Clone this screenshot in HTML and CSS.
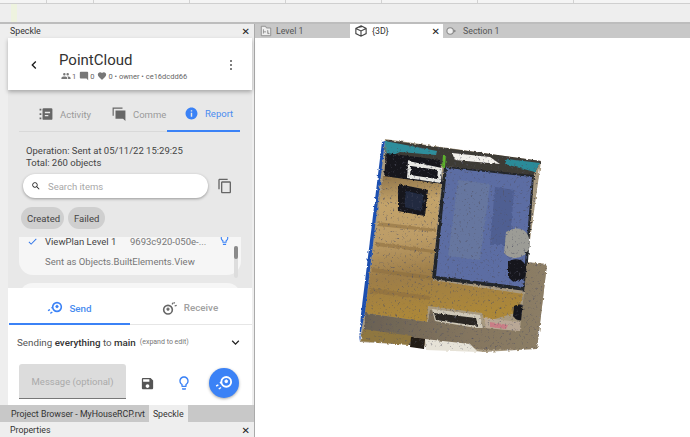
FILE: index.html
```html
<!DOCTYPE html>
<html lang="en">
<head>
<meta charset="utf-8">
<title>Speckle PointCloud</title>
<link rel="stylesheet" href="styles.css">
</head>
<body>
<div class="app">
  <div class="ribbon"><i></i><i></i><i></i><i></i><i></i><i></i><i></i></div>
  <div class="toolbar"><span class="mark"></span></div>
  <div class="work">
    <aside class="side">
      <div class="dock-title"><span>Speckle</span><b class="x">✕</b></div>
      <div class="plugin">
        <header class="head">
          <svg class="back" viewBox="0 0 24 24"><path d="M15.41 7.41L14 6l-6 6 6 6 1.41-1.41L10.83 12z"/></svg>
          <div class="head-text">
            <div class="title">PointCloud</div>
            <div class="meta">
              <svg viewBox="0 0 24 24"><path d="M16 11a3 3 0 1 0 0-6 3 3 0 0 0 0 6zm-8 0a3 3 0 1 0 0-6 3 3 0 0 0 0 6zm0 2c-2.3 0-7 1.2-7 3.500V19h14v-2.500C15 14.200 10.300 13 8 13zm8 0h-1c1.200.9 2 2 2 3.500V19h6v-2.500c0-2.300-4.700-3.500-7-3.500z"/></svg><span>1</span>
              <svg viewBox="0 0 24 24"><path d="M21.990 4c0-1.100-.89-2-1.990-2H4c-1.100 0-2 .9-2 2v12c0 1.100.9 2 2 2h14l4 4-.01-18z"/></svg><span>0</span>
              <svg viewBox="0 0 24 24"><path d="M12 21.350l-1.450-1.320C5.400 15.360 2 12.280 2 8.500 2 5.420 4.420 3 7.500 3c1.740 0 3.410.81 4.500 2.090C13.090 3.810 14.760 3 16.500 3 19.580 3 22 5.420 22 8.500c0 3.780-3.400 6.860-8.550 11.540L12 21.350z"/></svg><span>0 • owner • ce16dcdd66</span>
            </div>
          </div>
          <div class="dots"><i></i><i></i><i></i></div>
        </header>
        <section class="report">
          <nav class="tabs">
            <div class="tab">
              <svg class="tab-ic" viewBox="0 0 24 24"><path d="M1 3h3v3H1zM1 10.500h3v3H1zM1 18h3v3H1zM8 2h13a2 2 0 0 1 2 2v16a2 2 0 0 1-2 2H8a2 2 0 0 1-2-2V4a2 2 0 0 1 2-2zm2 6v2.500h9V8zm0 5.500V16h6v-2.500z" fill-rule="evenodd"/></svg>
              <span>Activity</span>
            </div>
            <div class="tab">
              <svg class="tab-ic" viewBox="0 0 24 24"><path d="M1 1h17v2H3v12H1zM6 6h17v18l-4-4H6z"/></svg>
              <span>Comme</span>
            </div>
            <div class="tab active">
              <svg class="tab-ic" viewBox="0 0 24 24"><path d="M12 1C5.930 1 1 5.930 1 12s4.930 11 11 11 11-4.930 11-11S18.070 1 12 1zm1.300 17h-2.600v-7.500h2.600V18zm0-9.500h-2.600V6h2.600v2.500z"/></svg>
              <span>Report</span>
            </div>
          </nav>
          <div class="summary">
            <div>Operation: Sent at 05/11/22 15:29:25</div>
            <div>Total: 260 objects</div>
          </div>
          <div class="search-row">
            <div class="search">
              <svg viewBox="0 0 24 24"><path d="M15.500 14h-.79l-.28-.27C15.410 12.590 16 11.110 16 9.500 16 5.910 13.090 3 9.500 3S3 5.910 3 9.500 5.910 16 9.500 16c1.610 0 3.090-.59 4.230-1.570l.27.28v.79l5 4.990L20.490 19l-4.990-5zm-6 0C7.010 14 5 11.990 5 9.500S7.010 5 9.500 5 14 7.010 14 9.500 11.990 14 9.500 14z"/></svg>
              <span>Search items</span>
            </div>
            <svg class="copy" viewBox="0 0 24 24"><path d="M16 1H4c-1.100 0-2 .9-2 2v14h2V3h12V1zm3 4H8c-1.100 0-2 .9-2 2v14c0 1.100.9 2 2 2h11c1.100 0 2-.9 2-2V7c0-1.100-.9-2-2-2zm0 16H8V7h11v14z"/></svg>
          </div>
          <div class="chips"><span class="chip">Created</span><span class="chip">Failed</span></div>
          <div class="list">
            <div class="card">
              <div class="row">
                <svg class="check" viewBox="0 0 24 24"><path d="M9 16.170L4.830 12l-1.420 1.410L9 19 21 7l-1.410-1.410z"/></svg>
                <span class="name">ViewPlan Level 1</span>
                <span class="id">9693c920-050e-...</span>
                <svg class="bulb-top" viewBox="0 0 24 24"><path d="M9 21c0 .55.45 1 1 1h4c.55 0 1-.45 1-1v-1H9v1zm3-19C8.140 2 5 5.140 5 9c0 2.380 1.190 4.470 3 5.740V17c0 .55.45 1 1 1h6c.55 0 1-.45 1-1v-2.260c1.810-1.270 3-3.360 3-5.740 0-3.860-3.140-7-7-7zm2.850 11.100l-.85.6V16h-4v-2.300l-.85-.6C7.800 12.160 7 10.630 7 9c0-2.760 2.240-5 5-5s5 2.240 5 5c0 1.630-.8 3.160-2.150 4.100z"/></svg>
              </div>
              <div class="sent">Sent as Objects.BuiltElements.View</div>
            </div>
            <div class="card next"></div>
            <div class="scroll"><i></i></div>
          </div>
        </section>
        <section class="sender">
          <nav class="send-tabs">
            <div class="stab active">
              <svg viewBox="0 0 24 24"><use href="#ball"/></svg><span>Send</span>
            </div>
            <div class="stab">
              <svg viewBox="0 0 24 24"><use href="#ball2"/></svg><span>Receive</span>
            </div>
          </nav>
          <div class="sending">
            <span>Sending <b>everything</b> to <b>main</b></span><small>(expand to edit)</small>
            <svg viewBox="0 0 24 24"><path d="M7.410 8.590L12 13.170l4.590-4.580L18 10l-6 6-6-6z"/></svg>
          </div>
          <div class="compose">
            <div class="message">Message (optional)</div>
            <svg class="save" viewBox="0 0 24 24"><path d="M17 3H5c-1.110 0-2 .9-2 2v14c0 1.100.89 2 2 2h14c1.100 0 2-.9 2-2V7l-4-4zm-5 16c-1.660 0-3-1.340-3-3s1.340-3 3-3 3 1.340 3 3-1.340 3-3 3zm3-10H5V5h10v4z"/></svg>
            <svg class="bulb" viewBox="0 0 24 24"><path d="M9 21c0 .55.45 1 1 1h4c.55 0 1-.45 1-1v-1H9v1zm3-19C8.140 2 5 5.140 5 9c0 2.380 1.190 4.470 3 5.740V17c0 .55.45 1 1 1h6c.55 0 1-.45 1-1v-2.260c1.810-1.270 3-3.360 3-5.740 0-3.860-3.140-7-7-7zm2.850 11.100l-.85.6V16h-4v-2.300l-.85-.6C7.800 12.160 7 10.630 7 9c0-2.760 2.240-5 5-5s5 2.240 5 5c0 1.630-.8 3.160-2.150 4.100z"/></svg>
            <div class="fab"><svg viewBox="0 0 24 24"><use href="#ballw"/></svg></div>
          </div>
        </section>
      </div>
      <div class="dock-tabs"><span class="dtab">Project Browser - MyHouseRCP.rvt</span><span class="dtab on">Speckle</span></div>
      <div class="dock-title props"><span>Properties</span><b class="x">✕</b></div>
    </aside>
    <main class="view">
      <div class="view-tabs">
        <div class="vtab">
          <svg viewBox="0 0 14 14"><path d="M1.500 1.500h5l1 2h5v9h-11z M4 5v5M4 8h3M9 6v4h2" fill="#eee" stroke="#888"/></svg><span>Level 1</span>
        </div>
        <div class="vtab on">
          <svg viewBox="0 0 14 14"><path d="M7 1l6 3v6l-6 3-6-3V4zM1 4l6 3 6-3M7 7v6M3 3l5-1" fill="#fff" stroke="#444" stroke-width="1.300"/></svg><span>{3D}</span><b class="x">✕</b>
        </div>
        <div class="vtab">
          <svg viewBox="0 0 14 14"><circle cx="6" cy="7" r="3.800" fill="#eee" stroke="#888" stroke-width="1.300"/><path d="M10 5l3 2-3 2z" fill="#888"/></svg><span>Section 1</span>
        </div>
      </div>
      <div class="canvas">
        <svg class="cloud" viewBox="0 0 690 437">
          <defs>
            <filter id="grain" x="-5%" y="-5%" width="110%" height="110%">
              <feTurbulence type="fractalNoise" baseFrequency="0.35" numOctaves="2" seed="4" result="n"/>
              <feDisplacementMap in="SourceGraphic" in2="n" scale="3"/>
              <feGaussianBlur stdDeviation="0.35"/>
            </filter>
            <filter id="speck" x="0" y="0" width="100%" height="100%">
              <feTurbulence type="fractalNoise" baseFrequency="0.42" numOctaves="2" seed="9"/>
              <feColorMatrix values="0 0 0 0 0.08  0 0 0 0 0.08  0 0 0 0 0.12  3 0 0 0 -1.850"/>
              <feComposite in2="SourceAlpha" operator="in"/>
            </filter>
            <linearGradient id="wood" x1="0" y1="0" x2="0.1" y2="1">
              <stop offset="0" stop-color="#8d7248"/><stop offset=".2" stop-color="#c3a36a"/>
              <stop offset=".45" stop-color="#bc9c66"/><stop offset=".7" stop-color="#9d7d48"/>
              <stop offset="1" stop-color="#ad8838"/>
            </linearGradient>
            <linearGradient id="band" x1="0" y1="0" x2="1" y2="0">
              <stop offset="0" stop-color="#6a6153"/><stop offset=".6" stop-color="#85765f"/><stop offset="1" stop-color="#8c7e66"/>
            </linearGradient>
          </defs>
          <g filter="url(#grain)">
            <path d="M385 139L541 161L527 262L547 264L537 349L484 352L430 346L360 342Z" fill="#a89a80"/>
            <path d="M386 140L541 161L533 176L445 166L385 160Z" fill="#3e3a36"/>
            <path d="M385 141L437 151L436 155L400 152L386 158Z" fill="#2f8e9c"/>
            <path d="M507 159L540 163L535 172L505 164Z" fill="#2b8b99"/>
            <path d="M452 153L490 157L500 164L455 160Z" fill="#f3f1ec"/>
            <path d="M386 153L440 160L443 184L384 178Z" fill="#17181f"/>
            <path d="M408 161L442 168L441 183L407 178Z" fill="#e8e8e4"/>
            <path d="M411 166L438 170L437 179L410 175Z" fill="#14151b"/>
            <path d="M443 155L446 155L445 167L442 167Z" fill="#5cb02c"/>
            <path d="M383 176L441 184L432 280L523 294L518 312L485 322L482 313L428 306L427 322L365 313Z" fill="url(#wood)"/>
            <path d="M378 222L436 229L436 232L378 226ZM376 242L434 250L434 253L376 246ZM372 268L432 276L432 280L372 272ZM370 288L430 296L430 300L370 293Z" fill="#8a6c3e" opacity=".55"/>
            <path d="M398 184L428 190L425 216L398 211Z" fill="#14161e"/>
            <path d="M406 191L424 195L421 211L404 207Z" fill="#212b40"/>
            <path d="M444 166L534 175L526 291L432 279Z" fill="#23252b"/>
            <path d="M447 168L532 177L523 287L436 276Z" fill="#5c6da3"/>
            <path d="M495 187L514 190L510 245L490 245Z" fill="#4f5f92"/>
            <path d="M458 180L490 184L480 260L448 256Z" fill="#66769f"/>
            <path d="M506 232C520 224 530 230 530 246C527 258 512 262 504 253Z" fill="#9c9c96"/>
            <path d="M508 262C516 256 527 260 527 272C525 283 512 285 508 276Z" fill="#17181c"/>
            <path d="M514 306C522 302 530 306 529 316C526 322 516 322 513 316Z" fill="#15161a"/>
            <path d="M430 310L479 316L484 328L520 331L527 263L547 264L537 349L484 350L430 341L365 332L365 313L428 322Z" fill="url(#band)"/>
            <path d="M432 309L480 315L483 328L476 328L435 321Z" fill="#cfc8b8"/>
            <path d="M434 313L476 318L478 326L436 320Z" fill="#2a2823"/>
            <path d="M484 318L520 322L520 331L486 328Z" fill="#b9a896"/>
            <path d="M490 322L508 325L506 329L490 327Z" fill="#c97e86"/>
            <path d="M363 329L412 336L410 345L361 341Z" fill="#8f7740"/>
            <path d="M411 337L425 339L424 349L410 347Z" fill="#231a12"/>
            <path d="M425 339L470 344L478 352L426 350Z" fill="#e6e2d7"/>
            <path d="M382 142L385 141L365 312L359 342L361 314Z" fill="#1f50b0"/>
          </g>
          <path filter="url(#speck)" d="M385 139L541 161L527 262L547 264L537 349L484 352L430 346L360 342Z" fill="#000"/>
        </svg>
      </div>
    </main>
  </div>
</div>
<svg class="defs" width="0" height="0">
  <defs>
    <g id="ball" fill="none" stroke="#3b82f6">
      <circle cx="15" cy="10.500" r="6.500" stroke-width="2.400"/>
      <path d="M13 9l2-1.500 2 1.500-.8 2.500h-2.400z" fill="#3b82f6" stroke-width="1"/>
      <path d="M1.500 16l3-1.500M5 20l3-2M6.500 12l2-1" stroke-width="2"/>
    </g>
    <g id="ball2" fill="none" stroke="#666">
      <circle cx="9" cy="14.500" r="6.500" stroke-width="2.400"/>
      <path d="M7 13l2-1.500 2 1.500-.8 2.500H7.800z" fill="#666" stroke-width="1"/>
      <path d="M17 4l-2 2.500M22 8l-3 1M19 3.500l-1 1.500" stroke-width="1.800"/>
    </g>
    <g id="ballw" fill="none" stroke="#fff">
      <circle cx="15" cy="10.500" r="6.500" stroke-width="2.400"/>
      <path d="M13 9l2-1.500 2 1.500-.8 2.500h-2.400z" fill="#fff" stroke-width="1"/>
      <path d="M1.500 16l3-1.500M5 20l3-2M6.500 12l2-1" stroke-width="2"/>
    </g>
  </defs>
</svg>
</body>
</html>
```
FILE: styles.css
```css
* { box-sizing: border-box; }
html, body { margin: 0; padding: 0; }
body { font-family: Roboto, "Liberation Sans", sans-serif; overflow: hidden; background: #eee; }
.defs { position: absolute; }
.app { width: 690px; height: 437px; display: flex; flex-direction: column; background: #eee; overflow: hidden; }

.ribbon { height: 4px; display: flex; background: #f4f4f4; border-bottom: 1px solid #cfcfcf; }
.ribbon i { width: 47px; border-right: 1px solid #d2d2d2; }
.ribbon i:nth-child(n+3) { width: 96px; }
.toolbar { height: 18px; background: #eee; padding-left: 11px; }
.mark { display: block; width: 6px; height: 18px; background: #eef3df; }

.work { flex: 1; display: flex; min-height: 0; border-top: 2px solid #bdbdbd; }
.side { width: 254px; flex: none; display: flex; flex-direction: column; background: #eee; }
.dock-title { height: 14px; display: flex; justify-content: space-between; align-items: center; padding: 0 4px 0 10px; font: 8.800px Roboto, sans-serif; color: #333; flex: none; }
.x { font: 700 10px "DejaVu Sans", sans-serif; color: #222; }
.plugin { margin: 0 2px 0 8px; height: 367px; flex: none; display: flex; flex-direction: column; }
.head { height: 52px; flex: none; background: #fff; box-shadow: 0 2px 4px rgba(0,0,0,.28); display: flex; align-items: center; padding: 0 20px 0 18px; position: relative; z-index: 1; }
.back { width: 16px; height: 16px; margin-top: 2px; fill: #1a1a1a; }
.head-text { margin-left: 17px; flex: 1; margin-top: 4px; }
.title { font-size: 15px; line-height: 19px; color: #333; }
.meta { display: flex; align-items: center; font-size: 7.500px; color: #666; height: 10px; margin-top: 1px; padding-left: 2px; }
.meta svg { width: 10px; height: 10px; fill: #777; margin-right: 1px; }
.meta span { margin-right: 3px; }
.dots { display: flex; flex-direction: column; gap: 2px; margin-top: 1px; }
.dots i { width: 2px; height: 2px; border-radius: 50%; background: #555; }

.report { height: 198px; flex: none; background: #e8e8e8; padding: 10px 11px 0; display: flex; flex-direction: column; }
.tabs { height: 32px; flex: none; display: flex; border-bottom: 1px solid #d9d9d9; width: 221px; }
.tab { display: flex; align-items: center; gap: 7px; font-size: 9.500px; color: #9a9a9a; padding-bottom: 3px; width: 74px; flex: none; padding-left: 20px; }
.tab:nth-child(2) { width: 74px; padding-left: 19px; }
.tab:nth-child(2) span { white-space: nowrap; }
.tab.active { width: 73px; padding-left: 18px; border-bottom: 1px solid #3b82f6; box-shadow: 0 1px 0 #3b82f6; color: #4a8cf0; }
.tab-ic { width: 14px; height: 14px; fill: #666; flex: none; }
.active .tab-ic { fill: #3b82f6; width: 13px; height: 13px; }

.summary { margin: 13px 0 0 7px; font-size: 9.500px; line-height: 12px; color: #444; }
.search-row { display: flex; align-items: center; margin: 5px 0 0 4px; }
.search { width: 185px; height: 24px; background: #fff; border-radius: 12px; box-shadow: 0 1px 3px rgba(0,0,0,.35); display: flex; align-items: center; padding-left: 8px; gap: 7px; font-size: 9.500px; color: #a8a8a8; }
.search svg { width: 10px; height: 10px; fill: #222; }
.copy { width: 16px; height: 16px; margin-left: 9px; fill: #666; }
.chips { display: flex; gap: 4px; margin: 9px 0 0 2px; }
.chip { height: 22px; padding: 0 6px; border-radius: 11px; background: #cfcfcf; display: flex; align-items: center; font-size: 9.500px; color: #444; }
.chip:first-child { width: 43px; }
.chip:last-child { width: 37px; }

.list { position: relative; margin-top: 8px; height: 51px; overflow: hidden; width: 222px; }
.card { height: 38px; background: #f6f6f6; border-radius: 0 0 14px 14px; padding: 0 0 0 8px; }
.card.next { height: 20px; margin-top: 8px; border-radius: 14px 14px 0 0; }
.row { display: flex; align-items: center; height: 8px; font-size: 9.500px; color: #444; }
.check { width: 11px; height: 11px; fill: #2f74e8; flex: none; }
.name { margin-left: 7px; width: 85px; flex: none; white-space: nowrap; }
.id { color: #777; width: 88px; flex: none; white-space: nowrap; }
.bulb-top { width: 13px; height: 15px; fill: #3b82f6; flex: none; margin-top: -4px; }
.sent { margin: 11px 0 0 18px; font-size: 9.500px; color: #777; }
.scroll { position: absolute; right: 3px; top: 9px; width: 4px; height: 32px; background: #ddd; border-radius: 2px; }
.scroll i { display: block; height: 13px; background: #8a8a8a; border-radius: 2px; }

.sender { flex: 1; background: #fff; display: flex; flex-direction: column; position: relative; z-index: 1; }
.send-tabs { height: 37px; flex: none; display: flex; border-bottom: 1px solid #e6e6e6; margin-left: 1px; }
.stab { width: 120px; flex: none; display: flex; align-items: center; justify-content: center; gap: 6px; font-size: 9.800px; font-weight: 500; color: #a0a0a0; padding-top: 3px; }
.stab svg { width: 16px; height: 16px; }
.stab.active { width: 121px; color: #4a8cf0; border-bottom: 2px solid #3b82f6; margin-bottom: -1px; padding-top: 5px; }
.sending { height: 34px; flex: none; display: flex; align-items: center; padding: 0 9px 0 9px; font-size: 9.800px; color: #555; }
.sending b { color: #333; font-weight: 500; }
.sending small { font-size: 7px; color: #777; margin-left: 4px; flex: 1; }
.sending svg { width: 15px; height: 15px; fill: #222; }
.compose { display: flex; align-items: center; padding: 5px 0 0 11px; }
.message { width: 107px; height: 35px; background: #dcdcdc; border-bottom: 1px solid #777; border-radius: 3px 3px 0 0; display: flex; align-items: center; justify-content: center; font-size: 9.500px; color: #aaa; flex: none; }
.save, .bulb, .fab { margin-top: 3px; }
.save { width: 15px; height: 15px; fill: #555; margin-left: 14px; }
.bulb { width: 16px; height: 16px; fill: #3b82f6; margin-left: 21px; }
.fab { width: 30px; height: 30px; border-radius: 50%; background: #3b82f6; margin-left: 17px; box-shadow: 0 1px 3px rgba(0,0,0,.35); display: flex; align-items: center; justify-content: center; }
.fab svg { width: 18px; height: 18px; }

.dock-tabs { height: 19px; flex: none; background: #c8c8c8; display: flex; font: 8.800px Roboto, sans-serif; color: #333; padding-left: 8px; border-bottom: 2px solid #eee; }
.dtab { padding: 0 3px; display: flex; align-items: center; }
.dtab.on { background: #eee; padding: 0 4px; margin-left: 1px; }
.dock-title.props { height: 12px; }

.view { flex: 1; display: flex; flex-direction: column; border-left: 1px solid #aaa; min-width: 0; }
.view-tabs { height: 14px; flex: none; background: #c8c8c8; display: flex; font: 8.800px Roboto, sans-serif; color: #555; padding-left: 2px; }
.vtab { width: 93px; display: flex; align-items: center; gap: 4px; padding-left: 3px; }
.vtab svg { width: 12px; height: 12px; flex: none; }
.vtab:last-child { padding-left: 2px; gap: 6px; }
.vtab.on { background: #fff; color: #333; padding-right: 3px; padding-left: 5px; gap: 5px; }
.vtab.on .x { margin-left: auto; }
.canvas { flex: 1; background: #fff; position: relative; overflow: hidden; }
.cloud { position: absolute; left: -255px; top: -38px; width: 690px; height: 437px; }
```
